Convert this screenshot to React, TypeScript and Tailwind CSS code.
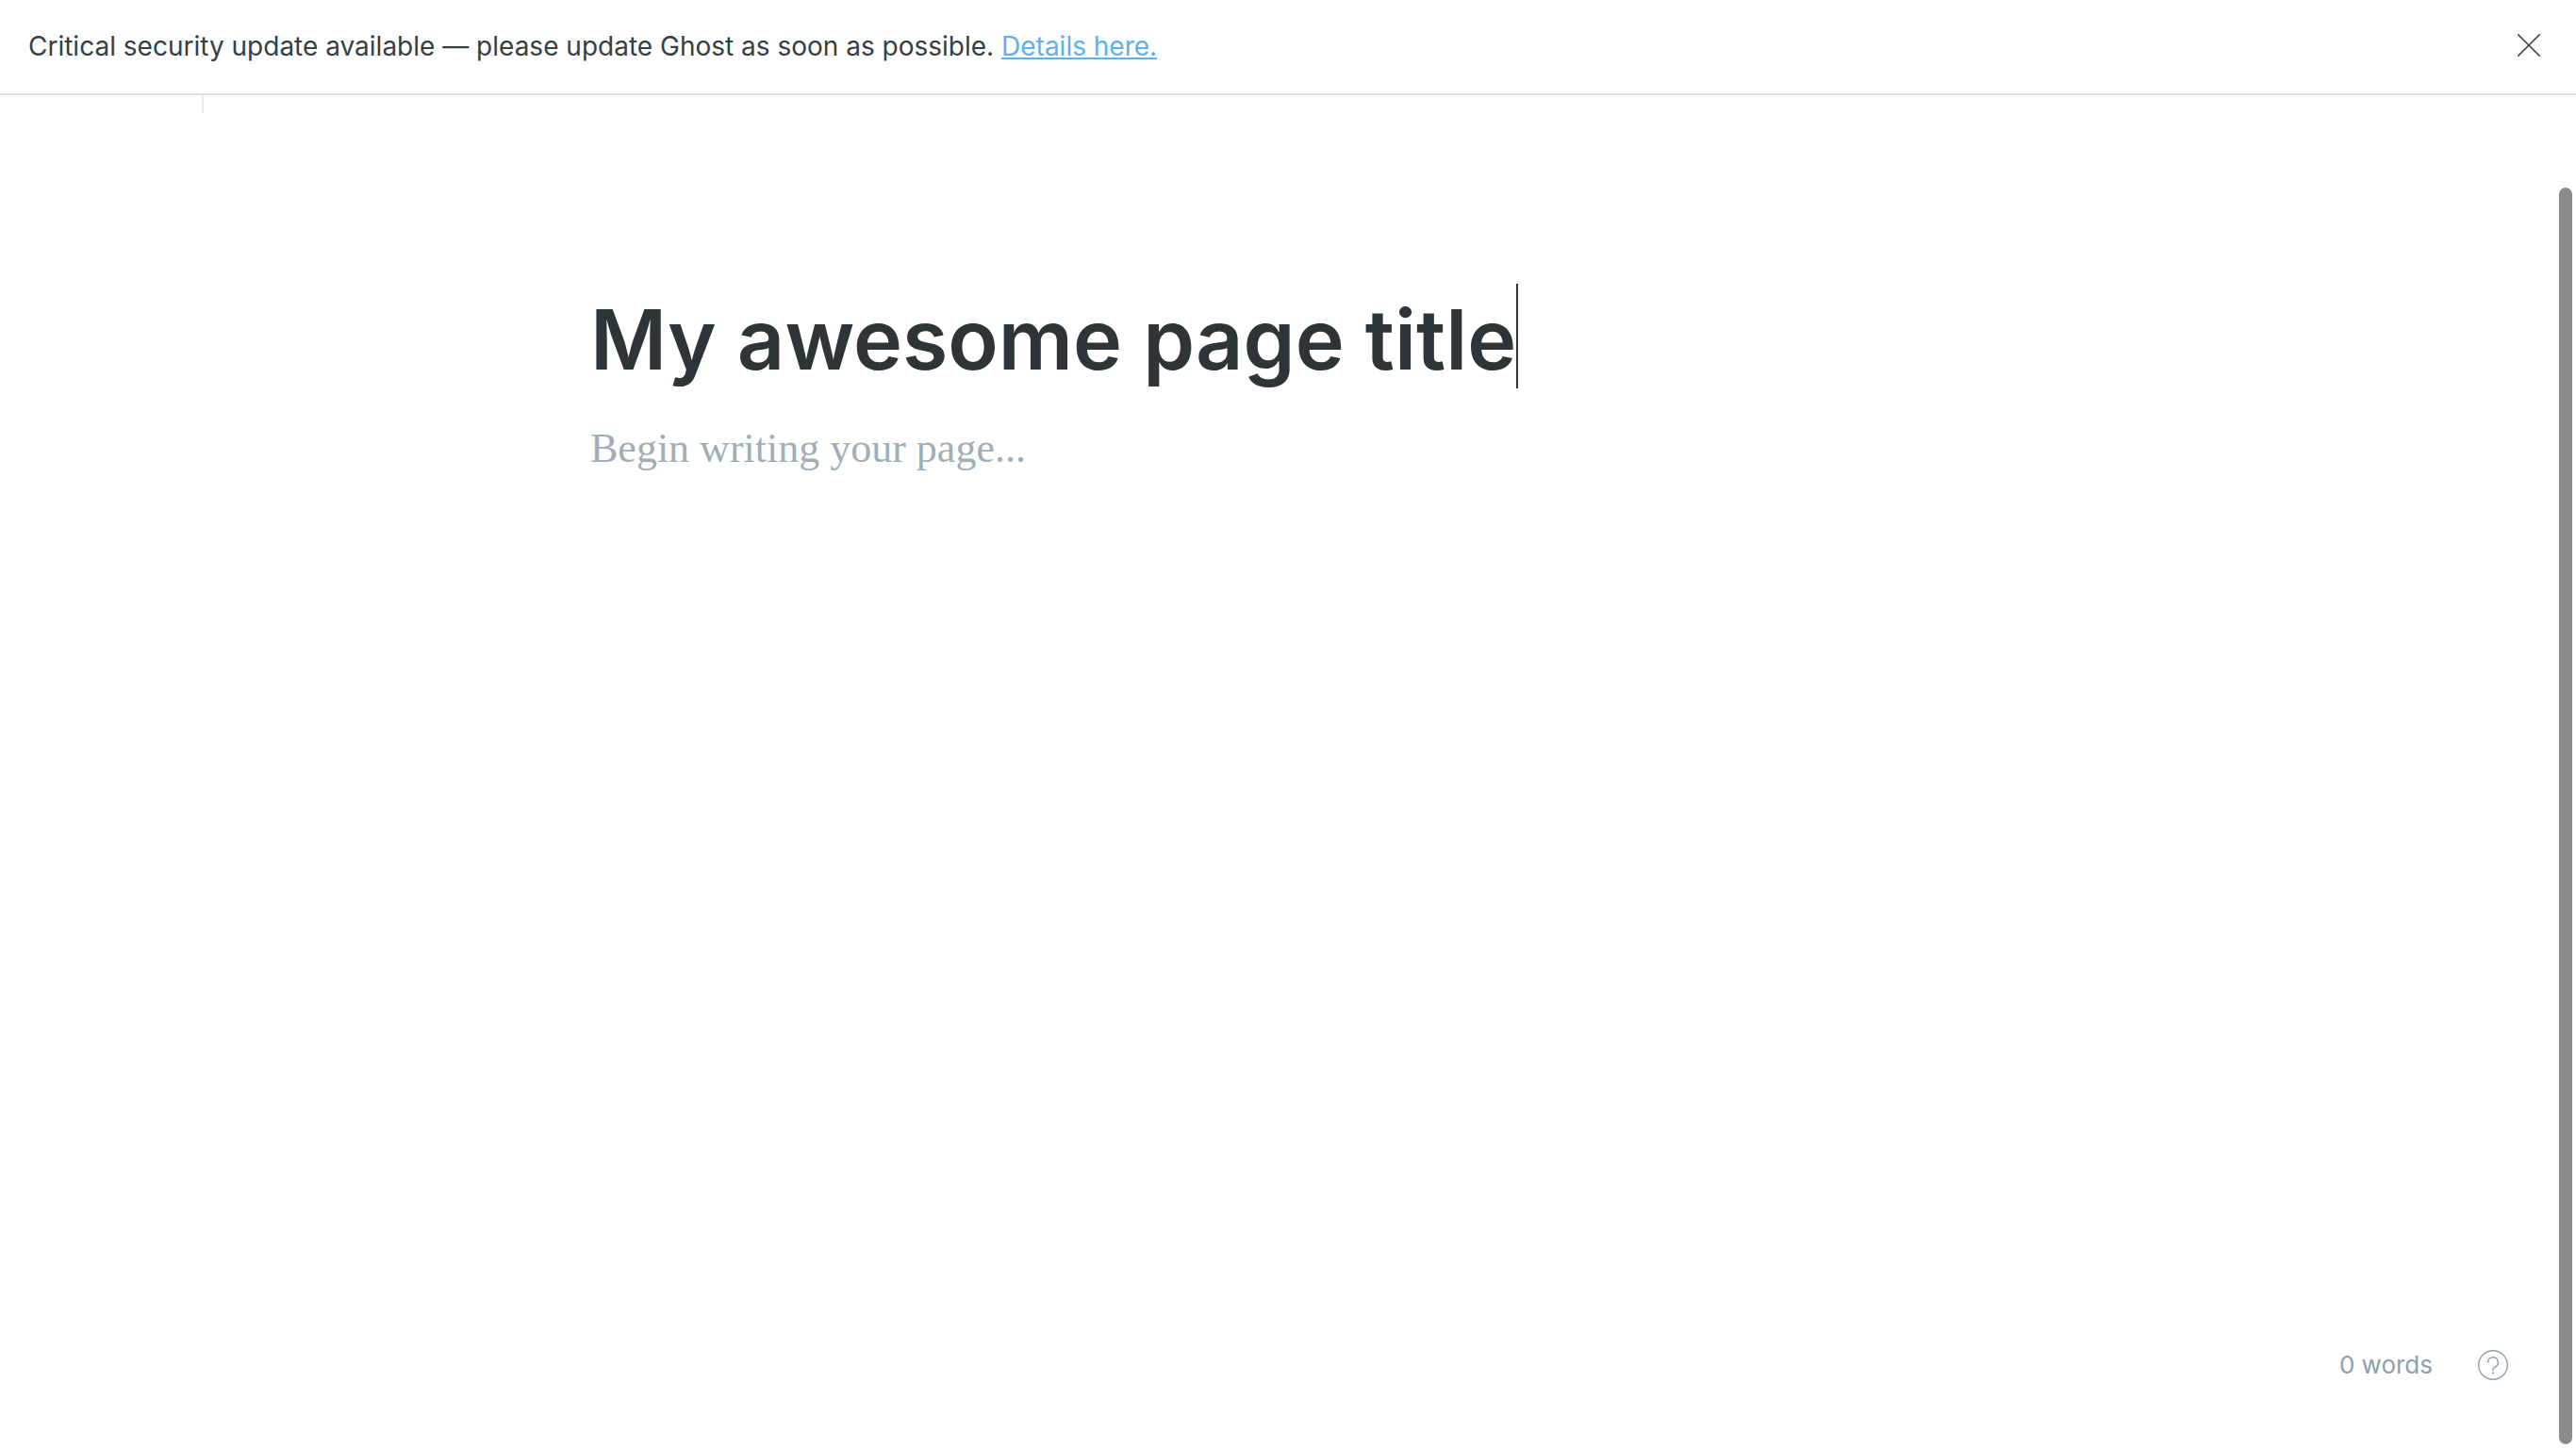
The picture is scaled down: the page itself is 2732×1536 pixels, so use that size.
import { useState } from "react";

function CloseIcon() {
  return (
    <svg viewBox="0 0 24 24" className="size-6" fill="none" stroke="currentColor" strokeWidth="1.6" strokeLinecap="round" aria-hidden="true">
      <path d="M0.7 0.7 23.3 23.3M23.3 0.7 0.7 23.3" />
    </svg>
  );
}

function HelpIcon() {
  return (
    <svg viewBox="0 0 32 32" className="size-8" fill="none" stroke="currentColor" strokeWidth="1.4" strokeLinecap="round" aria-hidden="true">
      <circle cx="16" cy="16" r="15.3" />
      <path d="M10.7 13.2a5.35 5.35 0 1 1 7.4 4.9c-1.4.6-2.1 1.4-2.1 2.9v.9" />
      <circle cx="16" cy="24.6" r="1.1" fill="currentColor" stroke="none" />
    </svg>
  );
}

function UpdateBanner({ onClose }: { onClose: () => void }) {
  return (
    <header className="flex items-start justify-between border-b-2 border-[#dfe1e3] py-7 px-[30px] text-[#343f44]">
      <p className="text-[28px] leading-[43px]">
        Critical security update available — please update Ghost as soon as possible.{" "}
        <a href="#details" className="text-[#5eb0ef] underline decoration-2 underline-offset-2">
          Details here.
        </a>
      </p>
      <button type="button" aria-label="Close notification" onClick={onClose} className="p-2">
        <CloseIcon />
      </button>
    </header>
  );
}

export default function App() {
  const [title, setTitle] = useState("My awesome page title");
  const [body, setBody] = useState("");
  const [banner, setBanner] = useState(true);
  const words = body.trim() ? body.trim().split(/\s+/).length : 0;

  return (
    <div className="flex h-screen flex-col overflow-hidden bg-white font-['Inter',sans-serif]">
      {banner && <UpdateBanner onClose={() => setBanner(false)} />}
      <div className="relative flex min-h-0 flex-1 flex-col">
        <div className="ml-[214px] h-[19px] w-0.5 bg-[#e5ecf3]" />
        <main className="mx-auto w-full max-w-[1480px] flex-1 pt-[180px]">
          <div className="flex items-center">
            <input
              aria-label="Page title"
              value={title}
              onChange={(e) => setTitle(e.target.value)}
              className="field-sizing-content h-[112px] pt-2 text-[88px] font-semibold text-[#2e3538] outline-none"
            />
            <span className="h-[111px] w-0.5 bg-[#2e3538]" />
          </div>
          <textarea
            aria-label="Page content"
            placeholder="Begin writing your page..."
            value={body}
            onChange={(e) => setBody(e.target.value)}
            className="mt-8 block h-40 w-full resize-none font-['Liberation_Serif',serif] text-[44px] leading-[64px] text-[#2e3538] outline-none placeholder:text-[#9fafb9]"
          />
        </main>
        <footer className="flex items-center justify-end gap-12 pr-[72px] pb-[68px] text-[#8b9fac]">
          <span className="text-[26px] leading-10">{words} words</span>
          <button type="button" aria-label="Help">
            <HelpIcon />
          </button>
        </footer>
        <div className="absolute top-[98px] right-1 bottom-1 w-3.5 rounded-full bg-[#8b8b8b]" />
      </div>
    </div>
  );
}
